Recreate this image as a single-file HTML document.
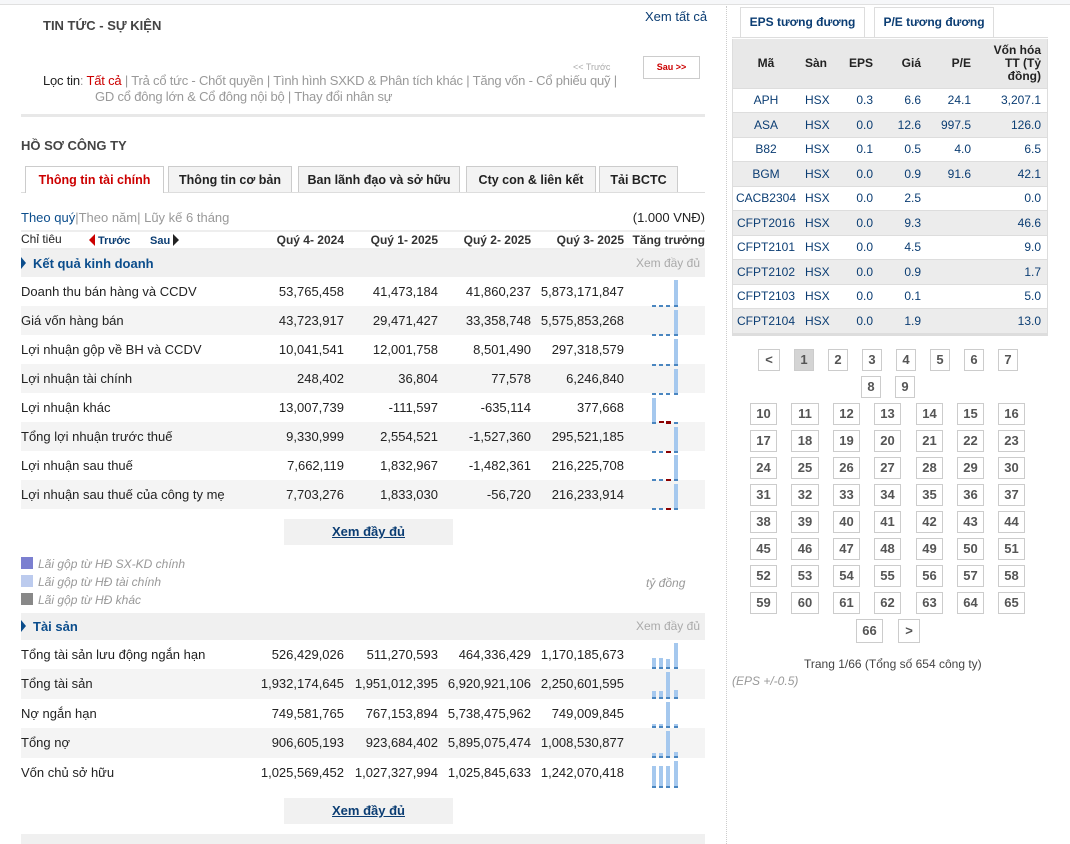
<!DOCTYPE html>
<html><head><meta charset="utf-8">
<style>
*{margin:0;padding:0;box-sizing:border-box}
body{width:1070px;height:844px;overflow:hidden;background:#fff;font-family:"Liberation Sans",Arial,sans-serif;color:#222;position:relative}
.a{position:absolute;white-space:nowrap}
.row{position:absolute;left:21px;width:684px;height:29px}
.row.g{background:#f4f4f4}
.row span{position:absolute;top:7px;font-size:13px;color:#222}
.c1{right:361px}.c2{right:267px}.c3{right:174px}.c4{right:81px}
.band{position:absolute;left:21px;width:684px;height:27px;background:#f0f0f0}
.band .t{position:absolute;left:12px;top:6px;font-size:13px;font-weight:bold;color:#0b4d8c}
.band .tri{position:absolute;left:0;top:7px;width:0;height:0;border-left:5px solid #0b4d8c;border-top:6px solid transparent;border-bottom:6px solid transparent}
.band .x{position:absolute;right:5px;top:6px;font-size:12px;color:#aaa}
.b{position:absolute;width:4px;background:#a5c8ee;border-bottom:2px solid #4a86c0}
.d{position:absolute;height:2px;width:4px;background:#4a86c0}
.dr{position:absolute;height:2px;width:5px;background:#8b0000}
.btn{position:absolute;left:284px;width:169px;height:26px;background:#f1f1f1;text-align:center;font-size:13px;font-weight:bold;line-height:26px}
.btn u{color:#0b3d73}
.pg{position:absolute;border:1px solid #ccc;background:#fff;font-size:13px;font-weight:bold;color:#555;text-align:center;line-height:20px;height:22px}
.tab{position:absolute;top:166px;height:26px;border:1px solid #ccc;border-bottom:none;background:#f3f3f3;font-size:12.5px;font-weight:bold;color:#222;line-height:26px;text-align:center}
table{border-collapse:collapse}
.rt td{height:24.5px;font-size:12px;color:#0b3d73;border-bottom:1px solid #ddd;padding:0 6px 0 0;text-align:right}
.rt tr.g td{background:#ececec}
</style></head><body>
<div class="a" style="left:0;top:0;width:1070px;height:5px;background:#f6f7f9;border-bottom:1px solid #e0e0e0"></div>
<div class="a" style="left:726px;top:6px;height:838px;border-left:1px dotted #ccc"></div>

<div class="a" style="left:43px;top:18px;font-size:13px;font-weight:bold;color:#444">TIN TỨC - SỰ KIỆN</div>
<div class="a" style="left:645px;top:9px;font-size:13px;color:#0b3d73">Xem tất cả</div>
<div class="a" style="left:573px;top:62px;font-size:9px;color:#aaa">&lt;&lt; Trước</div>
<div class="a" style="left:643px;top:56px;width:57px;height:23px;border:1px solid #ccc;font-size:9px;font-weight:bold;color:#c00;text-align:center;line-height:21px">Sau &gt;&gt;</div>
<div class="a" style="left:43px;top:73px;font-size:13px;color:#999;line-height:16px;letter-spacing:-0.2px"><span style="color:#222">Lọc tin</span>: <span style="color:#c00">Tất cả</span> | Trả cổ tức - Chốt quyền | Tình hình SXKD &amp; Phân tích khác | Tăng vốn - Cổ phiếu quỹ |<br><span style="padding-left:52px">GD cổ đông lớn &amp; Cổ đông nội bộ | Thay đổi nhân sự</span></div>
<div class="a" style="left:21px;top:114px;width:684px;height:3px;background:#e8e8e8"></div>

<div class="a" style="left:21px;top:138px;font-size:13px;font-weight:bold;color:#444">HỒ SƠ CÔNG TY</div>
<div class="a" style="left:21px;top:192px;width:684px;border-top:1px solid #ddd"></div>
<div class="tab" style="left:25px;width:139px;height:27px;background:#fff;color:#c00">Thông tin tài chính</div>
<div class="tab" style="left:168px;width:124px">Thông tin cơ bản</div>
<div class="tab" style="left:298px;width:162px">Ban lãnh đạo và sở hữu</div>
<div class="tab" style="left:466px;width:130px">Cty con &amp; liên kết</div>
<div class="tab" style="left:599px;width:79px">Tải BCTC</div>

<div class="a" style="left:21px;top:210px;font-size:13px;color:#999"><span style="color:#0b4d8c">Theo quý</span>|Theo năm| Lũy kế 6 tháng</div>
<div class="a" style="right:365px;top:210px;font-size:13px;color:#222">(1.000 VNĐ)</div>
<div class="a" style="left:21px;top:230px;width:684px;border-top:2px solid #eee"></div>
<div class="a" style="left:21px;top:232px;font-size:12px;color:#222">Chỉ tiêu</div>
<div class="a" style="left:89px;top:234px;width:0;height:0;border-right:6px solid #c00;border-top:6px solid transparent;border-bottom:6px solid transparent"></div>
<div class="a" style="left:98px;top:235px;font-size:11px;font-weight:bold;color:#0b3d73">Trước</div>
<div class="a" style="left:150px;top:235px;font-size:11px;font-weight:bold;color:#0b3d73">Sau</div>
<div class="a" style="left:173px;top:234px;width:0;height:0;border-left:6px solid #222;border-top:6px solid transparent;border-bottom:6px solid transparent"></div>
<div class="a" style="right:726px;top:233px;font-size:12px;font-weight:bold;color:#333">Quý 4- 2024</div>
<div class="a" style="right:632px;top:233px;font-size:12px;font-weight:bold;color:#333">Quý 1- 2025</div>
<div class="a" style="right:539px;top:233px;font-size:12px;font-weight:bold;color:#333">Quý 2- 2025</div>
<div class="a" style="right:446px;top:233px;font-size:12px;font-weight:bold;color:#333">Quý 3- 2025</div>
<div class="a" style="right:365px;top:233px;font-size:12px;font-weight:bold;color:#333">Tăng trưởng</div>
<div class="a" style="left:21px;top:248px;width:684px;border-top:2px solid #eee"></div>

<div class="band" style="top:250px"><div class="tri"></div><div class="t">Kết quả kinh doanh</div><div class="x">Xem đầy đủ</div></div>

<div class="row" style="top:277px"><span style="left:0">Doanh thu bán hàng và CCDV</span><span class="c1">53,765,458</span><span class="c2">41,473,184</span><span class="c3">41,860,237</span><span class="c4">5,873,171,847</span></div>
<div class="row g" style="top:306px"><span style="left:0">Giá vốn hàng bán</span><span class="c1">43,723,917</span><span class="c2">29,471,427</span><span class="c3">33,358,748</span><span class="c4">5,575,853,268</span></div>
<div class="row" style="top:335px"><span style="left:0">Lợi nhuận gộp về BH và CCDV</span><span class="c1">10,041,541</span><span class="c2">12,001,758</span><span class="c3">8,501,490</span><span class="c4">297,318,579</span></div>
<div class="row g" style="top:364px"><span style="left:0">Lợi nhuận tài chính</span><span class="c1">248,402</span><span class="c2">36,804</span><span class="c3">77,578</span><span class="c4">6,246,840</span></div>
<div class="row" style="top:393px"><span style="left:0">Lợi nhuận khác</span><span class="c1">13,007,739</span><span class="c2">-111,597</span><span class="c3">-635,114</span><span class="c4">377,668</span></div>
<div class="row g" style="top:422px"><span style="left:0">Tổng lợi nhuận trước thuế</span><span class="c1">9,330,999</span><span class="c2">2,554,521</span><span class="c3">-1,527,360</span><span class="c4">295,521,185</span></div>
<div class="row" style="top:451px"><span style="left:0">Lợi nhuận sau thuế</span><span class="c1">7,662,119</span><span class="c2">1,832,967</span><span class="c3">-1,482,361</span><span class="c4">216,225,708</span></div>
<div class="row g" style="top:480px"><span style="left:0">Lợi nhuận sau thuế của công ty mẹ</span><span class="c1">7,703,276</span><span class="c2">1,833,030</span><span class="c3">-56,720</span><span class="c4">216,233,914</span></div>

<div class="d" style="left:652px;top:305px"></div><div class="d" style="left:659px;top:305px"></div><div class="d" style="left:666px;top:305px"></div><div class="b" style="left:674px;top:280px;height:27px"></div>
<div class="d" style="left:652px;top:334px"></div><div class="d" style="left:659px;top:334px"></div><div class="d" style="left:666px;top:334px"></div><div class="b" style="left:674px;top:310px;height:26px"></div>
<div class="d" style="left:652px;top:364px"></div><div class="d" style="left:659px;top:364px"></div><div class="d" style="left:666px;top:364px"></div><div class="b" style="left:674px;top:339px;height:27px"></div>
<div class="d" style="left:652px;top:393px"></div><div class="d" style="left:659px;top:393px"></div><div class="d" style="left:666px;top:393px"></div><div class="b" style="left:674px;top:369px;height:26px"></div>
<div class="b" style="left:652px;top:398px;height:26px"></div><div class="dr" style="left:659px;top:421px"></div><div class="dr" style="left:666px;top:421px;height:3px"></div><div class="d" style="left:674px;top:422px"></div>
<div class="d" style="left:652px;top:451px"></div><div class="d" style="left:659px;top:451px"></div><div class="dr" style="left:666px;top:451px"></div><div class="b" style="left:674px;top:427px;height:26px"></div>
<div class="d" style="left:652px;top:479px"></div><div class="d" style="left:659px;top:479px"></div><div class="dr" style="left:666px;top:479px"></div><div class="b" style="left:674px;top:455px;height:26px"></div>
<div class="d" style="left:652px;top:508px"></div><div class="d" style="left:659px;top:508px"></div><div class="dr" style="left:666px;top:508px"></div><div class="b" style="left:674px;top:484px;height:26px"></div>

<div class="btn" style="top:519px"><u>Xem đầy đủ</u></div>

<div class="a" style="left:21px;top:557px;width:12px;height:12px;background:#7b7fd0"></div>
<div class="a" style="left:38px;top:557px;font-size:12px;font-style:italic;color:#999">Lãi gộp từ HĐ SX-KD chính</div>
<div class="a" style="left:21px;top:575px;width:12px;height:12px;background:#bccbee"></div>
<div class="a" style="left:38px;top:575px;font-size:12px;font-style:italic;color:#999">Lãi gộp từ HĐ tài chính</div>
<div class="a" style="left:21px;top:593px;width:12px;height:12px;background:#888"></div>
<div class="a" style="left:38px;top:593px;font-size:12px;font-style:italic;color:#999">Lãi gộp từ HĐ khác</div>
<div class="a" style="left:646px;top:576px;font-size:12px;font-style:italic;color:#999">tỷ đồng</div>

<div class="band" style="top:613px"><div class="tri"></div><div class="t">Tài sản</div><div class="x">Xem đầy đủ</div></div>
<div class="row" style="top:640px"><span style="left:0">Tổng tài sản lưu động ngắn hạn</span><span class="c1">526,429,026</span><span class="c2">511,270,593</span><span class="c3">464,336,429</span><span class="c4">1,170,185,673</span></div>
<div class="row g" style="top:669px;height:30px"><span style="left:0">Tổng tài sản</span><span class="c1">1,932,174,645</span><span class="c2">1,951,012,395</span><span class="c3">6,920,921,106</span><span class="c4">2,250,601,595</span></div>
<div class="row" style="top:699px"><span style="left:0">Nợ ngắn hạn</span><span class="c1">749,581,765</span><span class="c2">767,153,894</span><span class="c3">5,738,475,962</span><span class="c4">749,009,845</span></div>
<div class="row g" style="top:728px;height:30px"><span style="left:0">Tổng nợ</span><span class="c1">906,605,193</span><span class="c2">923,684,402</span><span class="c3">5,895,075,474</span><span class="c4">1,008,530,877</span></div>
<div class="row" style="top:758px"><span style="left:0">Vốn chủ sở hữu</span><span class="c1">1,025,569,452</span><span class="c2">1,027,327,994</span><span class="c3">1,025,845,633</span><span class="c4">1,242,070,418</span></div>

<div class="b" style="left:652px;top:658px;height:11px"></div><div class="b" style="left:659px;top:658px;height:11px"></div><div class="b" style="left:666px;top:659px;height:10px"></div><div class="b" style="left:674px;top:643px;height:26px"></div>
<div class="b" style="left:652px;top:691px;height:8px"></div><div class="b" style="left:659px;top:691px;height:8px"></div><div class="b" style="left:666px;top:672px;height:27px"></div><div class="b" style="left:674px;top:690px;height:9px"></div>
<div class="b" style="left:652px;top:724px;height:4px"></div><div class="b" style="left:659px;top:724px;height:4px"></div><div class="b" style="left:666px;top:702px;height:26px"></div><div class="b" style="left:674px;top:724px;height:4px"></div>
<div class="b" style="left:652px;top:753px;height:5px"></div><div class="b" style="left:659px;top:753px;height:5px"></div><div class="b" style="left:666px;top:731px;height:27px"></div><div class="b" style="left:674px;top:752px;height:6px"></div>
<div class="b" style="left:652px;top:766px;height:22px"></div><div class="b" style="left:659px;top:766px;height:22px"></div><div class="b" style="left:666px;top:766px;height:22px"></div><div class="b" style="left:674px;top:761px;height:27px"></div>

<div class="btn" style="top:798px"><u>Xem đầy đủ</u></div>
<div class="a" style="left:21px;top:834px;width:684px;height:10px;background:#f0f0f0"></div>

<div class="a" style="left:740px;top:7px;width:125px;height:30px;border:1px solid #ddd;border-bottom:none;font-size:12px;font-weight:bold;color:#0b3d73;text-align:center;line-height:28px">EPS tương đương</div>
<div class="a" style="left:874px;top:7px;width:120px;height:30px;border:1px solid #ddd;border-bottom:none;font-size:12px;font-weight:bold;color:#0b3d73;text-align:center;line-height:28px">P/E tương đương</div>
<div class="a" style="left:732px;top:37px;width:316px;border-top:1px solid #ddd"></div>
<div class="a" style="left:732px;top:39px;width:316px;border:1px solid #ddd;border-top:none;border-bottom:3px solid #ddd">
<table class="rt" style="width:314px">
<tr style="background:#e8e8e8"><td style="height:49px;font-weight:bold;color:#222;text-align:center;width:66px;padding:0">Mã</td><td style="font-weight:bold;color:#222;text-align:left;width:40px;padding-left:6px">Sàn</td><td style="font-weight:bold;color:#222;width:40px">EPS</td><td style="font-weight:bold;color:#222;width:48px">Giá</td><td style="font-weight:bold;color:#222;width:50px">P/E</td><td style="font-weight:bold;color:#222;line-height:13px">Vốn hóa<br>TT (Tỷ<br>đồng)</td></tr>
<tr><td style="text-align:center;padding:0">APH</td><td style="text-align:left;padding-left:6px">HSX</td><td>0.3</td><td>6.6</td><td>24.1</td><td>3,207.1</td></tr>
<tr class="g"><td style="text-align:center;padding:0">ASA</td><td style="text-align:left;padding-left:6px">HSX</td><td>0.0</td><td>12.6</td><td>997.5</td><td>126.0</td></tr>
<tr><td style="text-align:center;padding:0">B82</td><td style="text-align:left;padding-left:6px">HSX</td><td>0.1</td><td>0.5</td><td>4.0</td><td>6.5</td></tr>
<tr class="g"><td style="text-align:center;padding:0">BGM</td><td style="text-align:left;padding-left:6px">HSX</td><td>0.0</td><td>0.9</td><td>91.6</td><td>42.1</td></tr>
<tr><td style="text-align:center;padding:0">CACB2304</td><td style="text-align:left;padding-left:6px">HSX</td><td>0.0</td><td>2.5</td><td></td><td>0.0</td></tr>
<tr class="g"><td style="text-align:center;padding:0">CFPT2016</td><td style="text-align:left;padding-left:6px">HSX</td><td>0.0</td><td>9.3</td><td></td><td>46.6</td></tr>
<tr><td style="text-align:center;padding:0">CFPT2101</td><td style="text-align:left;padding-left:6px">HSX</td><td>0.0</td><td>4.5</td><td></td><td>9.0</td></tr>
<tr class="g"><td style="text-align:center;padding:0">CFPT2102</td><td style="text-align:left;padding-left:6px">HSX</td><td>0.0</td><td>0.9</td><td></td><td>1.7</td></tr>
<tr><td style="text-align:center;padding:0">CFPT2103</td><td style="text-align:left;padding-left:6px">HSX</td><td>0.0</td><td>0.1</td><td></td><td>5.0</td></tr>
<tr class="g"><td style="text-align:center;padding:0;border-bottom:none">CFPT2104</td><td style="text-align:left;padding-left:6px;border-bottom:none">HSX</td><td style="border-bottom:none">0.0</td><td style="border-bottom:none">1.9</td><td style="border-bottom:none"></td><td style="border-bottom:none">13.0</td></tr>
</table></div>

<div class="pg" style="left:758px;top:349px;width:22px">&lt;</div>
<div class="pg" style="left:794px;top:349px;width:20px;background:#d4d4d4">1</div>
<div class="pg" style="left:828px;top:349px;width:20px">2</div>
<div class="pg" style="left:862px;top:349px;width:20px">3</div>
<div class="pg" style="left:896px;top:349px;width:20px">4</div>
<div class="pg" style="left:930px;top:349px;width:20px">5</div>
<div class="pg" style="left:964px;top:349px;width:20px">6</div>
<div class="pg" style="left:998px;top:349px;width:20px">7</div>
<div class="pg" style="left:861px;top:376px;width:20px">8</div>
<div class="pg" style="left:895px;top:376px;width:20px">9</div>

<div class="pg" style="left:750px;top:403px;width:27px">10</div><div class="pg" style="left:791px;top:403px;width:28px">11</div><div class="pg" style="left:833px;top:403px;width:27px">12</div><div class="pg" style="left:874px;top:403px;width:27px">13</div><div class="pg" style="left:916px;top:403px;width:27px">14</div><div class="pg" style="left:957px;top:403px;width:27px">15</div><div class="pg" style="left:998px;top:403px;width:27px">16</div>
<div class="pg" style="left:750px;top:430px;width:27px">17</div><div class="pg" style="left:791px;top:430px;width:28px">18</div><div class="pg" style="left:833px;top:430px;width:27px">19</div><div class="pg" style="left:874px;top:430px;width:27px">20</div><div class="pg" style="left:916px;top:430px;width:27px">21</div><div class="pg" style="left:957px;top:430px;width:27px">22</div><div class="pg" style="left:998px;top:430px;width:27px">23</div>
<div class="pg" style="left:750px;top:457px;width:27px">24</div><div class="pg" style="left:791px;top:457px;width:28px">25</div><div class="pg" style="left:833px;top:457px;width:27px">26</div><div class="pg" style="left:874px;top:457px;width:27px">27</div><div class="pg" style="left:916px;top:457px;width:27px">28</div><div class="pg" style="left:957px;top:457px;width:27px">29</div><div class="pg" style="left:998px;top:457px;width:27px">30</div>
<div class="pg" style="left:750px;top:484px;width:27px">31</div><div class="pg" style="left:791px;top:484px;width:28px">32</div><div class="pg" style="left:833px;top:484px;width:27px">33</div><div class="pg" style="left:874px;top:484px;width:27px">34</div><div class="pg" style="left:916px;top:484px;width:27px">35</div><div class="pg" style="left:957px;top:484px;width:27px">36</div><div class="pg" style="left:998px;top:484px;width:27px">37</div>
<div class="pg" style="left:750px;top:511px;width:27px">38</div><div class="pg" style="left:791px;top:511px;width:28px">39</div><div class="pg" style="left:833px;top:511px;width:27px">40</div><div class="pg" style="left:874px;top:511px;width:27px">41</div><div class="pg" style="left:916px;top:511px;width:27px">42</div><div class="pg" style="left:957px;top:511px;width:27px">43</div><div class="pg" style="left:998px;top:511px;width:27px">44</div>
<div class="pg" style="left:750px;top:538px;width:27px">45</div><div class="pg" style="left:791px;top:538px;width:28px">46</div><div class="pg" style="left:833px;top:538px;width:27px">47</div><div class="pg" style="left:874px;top:538px;width:27px">48</div><div class="pg" style="left:916px;top:538px;width:27px">49</div><div class="pg" style="left:957px;top:538px;width:27px">50</div><div class="pg" style="left:998px;top:538px;width:27px">51</div>
<div class="pg" style="left:750px;top:565px;width:27px">52</div><div class="pg" style="left:791px;top:565px;width:28px">53</div><div class="pg" style="left:833px;top:565px;width:27px">54</div><div class="pg" style="left:874px;top:565px;width:27px">55</div><div class="pg" style="left:916px;top:565px;width:27px">56</div><div class="pg" style="left:957px;top:565px;width:27px">57</div><div class="pg" style="left:998px;top:565px;width:27px">58</div>
<div class="pg" style="left:750px;top:592px;width:27px">59</div><div class="pg" style="left:791px;top:592px;width:28px">60</div><div class="pg" style="left:833px;top:592px;width:27px">61</div><div class="pg" style="left:874px;top:592px;width:27px">62</div><div class="pg" style="left:916px;top:592px;width:27px">63</div><div class="pg" style="left:957px;top:592px;width:27px">64</div><div class="pg" style="left:998px;top:592px;width:27px">65</div>
<div class="pg" style="left:856px;top:619px;width:27px;height:24px;line-height:22px">66</div>
<div class="pg" style="left:898px;top:619px;width:22px;height:24px;line-height:22px">&gt;</div>

<div class="a" style="left:804px;top:657px;font-size:12px;color:#444">Trang 1/66 (Tổng số 654 công ty)</div>
<div class="a" style="left:732px;top:674px;font-size:12px;font-style:italic;color:#999">(EPS +/-0.5)</div>
</body></html>
